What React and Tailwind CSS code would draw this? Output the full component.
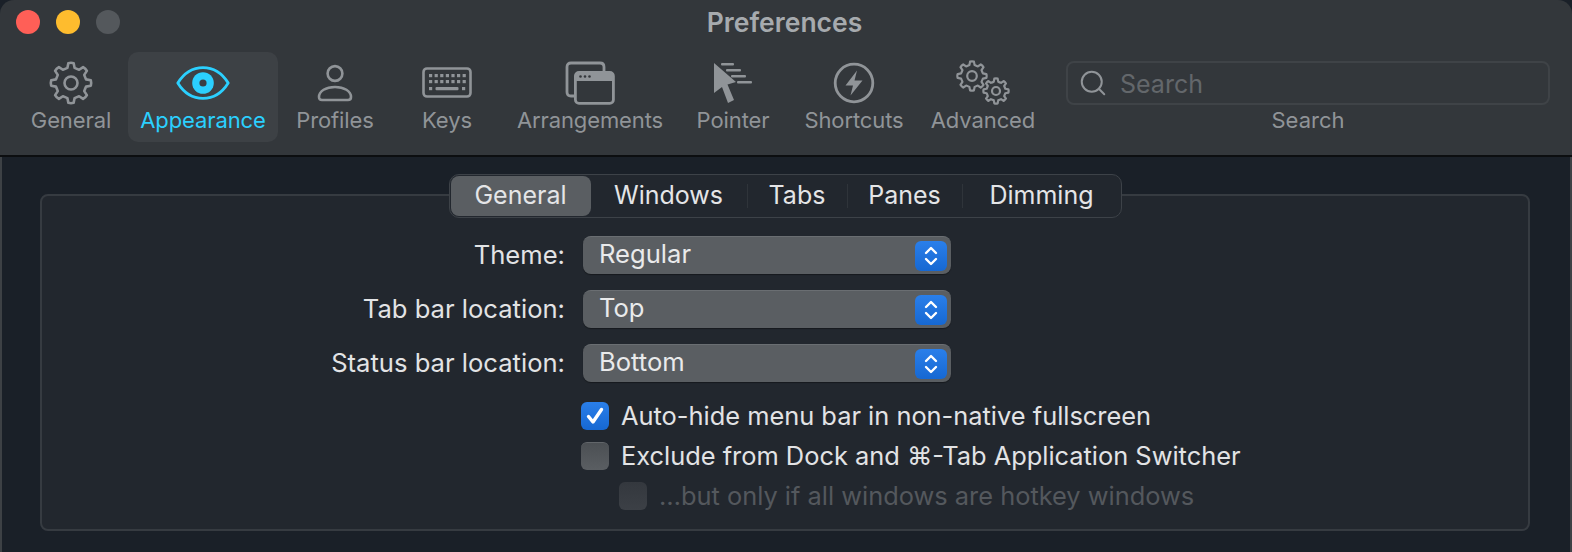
import React from 'react';
import { Search } from 'lucide-react';

// builds a cog outline, the SF "gearshape" look
function gearPath(cx, cy, outer, inner, teeth) {
  const pts = [];
  const step = (Math.PI * 2) / teeth;
  for (let i = 0; i < teeth; i++) {
    const a = i * step - Math.PI / 2;
    const at = (r, d) => `${(cx + r * Math.cos(a + d * step)).toFixed(2)} ${(cy + r * Math.sin(a + d * step)).toFixed(2)}`;
    pts.push(`${i === 0 ? 'M' : 'L'}${at(inner, -0.3)}`);
    pts.push(`L${at(outer, -0.17)}`);
    pts.push(`Q${at(outer * 1.03, 0)} ${at(outer, 0.17)}`);
    pts.push(`L${at(inner, 0.3)}`);
    pts.push(`Q${at(inner * 0.98, 0.5)} ${at(inner, 0.7)}`);
  }
  return pts.join(' ') + 'Z';
}

const GearIcon = () => (
  <svg width="44" height="44" viewBox="0 0 44 44" fill="none" stroke="#909498" strokeWidth="2.6" strokeLinejoin="round">
    <path d={gearPath(22, 22, 20, 15.5, 8)} />
    <circle cx="22" cy="22" r="6.5" />
  </svg>
);

const EyeIcon = () => (
  <svg width="54" height="34" viewBox="0 0 54 34" fill="none">
    <path d="M1.8 17C8 7 17 1.6 27 1.6S46 7 52.2 17C46 27 37 32.4 27 32.4S8 27 1.8 17Z" stroke="#2bd0ff" strokeWidth="2.8" strokeLinejoin="round" />
    <circle cx="27" cy="17" r="10.8" fill="#2bd0ff" />
    <circle cx="27" cy="17" r="3.6" fill="#3b3f43" />
  </svg>
);

const PersonIcon = () => (
  <svg width="36" height="38" viewBox="0 0 36 38" fill="none" stroke="#909498" strokeWidth="2.6">
    <circle cx="18" cy="9.5" r="7.4" />
    <path d="M2 33C2 27 9 23 18 23S34 27 34 33C34 35 33 36 31 36H5C3 36 2 35 2 33Z" strokeLinejoin="round" />
  </svg>
);

const KeyboardIcon = () => {
  const keys = [];
  for (let row = 0; row < 2; row++) {
    for (let i = 0; i < 7; i++) keys.push(<rect key={`${row}-${i}`} x={7 + i * 5.6} y={row === 0 ? 7 : 13} width="3.2" height="3.2" />);
  }
  return (
    <svg width="50" height="32" viewBox="0 0 50 32" fill="#909498">
      <rect x="1.5" y="1.5" width="47" height="28" rx="3.5" fill="none" stroke="#909498" strokeWidth="2.6" />
      {keys}
      <rect x="7" y="20" width="3.2" height="3.2" />
      <rect x="13.5" y="20" width="23" height="3.2" rx="1" />
      <rect x="40" y="20" width="3.2" height="3.2" />
    </svg>
  );
};

const ArrangementsIcon = () => (
  <svg width="52" height="44" viewBox="0 0 52 44" fill="none">
    <path d="M3 31V6C3 3.5 4.5 2 7 2H36C38.5 2 40 3.5 40 6V10" stroke="#909498" strokeWidth="2.8" />
    <path d="M3 31C3 33.5 4.5 35 7 35H11" stroke="#909498" strokeWidth="2.8" />
    <path d="M11 16C11 12.5 12.5 11 15 11H46C48.5 11 50 12.5 50 15V20H11Z" fill="#909498" />
    <rect x="11.4" y="11.4" width="38" height="31" rx="3.6" stroke="#909498" strokeWidth="2.8" />
    <circle cx="16.5" cy="15.5" r="1.3" fill="#33373b" />
    <circle cx="21" cy="15.5" r="1.3" fill="#33373b" />
    <circle cx="25.5" cy="15.5" r="1.3" fill="#33373b" />
  </svg>
);

const PointerIcon = () => (
  <svg width="40" height="42" viewBox="0 0 40 42" fill="#909498">
    <path d="M1 1L23 20L14.5 22.5L21 38L15 41L9 25L1 31Z" />
    <rect x="8" y="1" width="13" height="2.4" rx="1" />
    <rect x="13" y="7" width="15" height="2.4" rx="1" />
    <rect x="18" y="13" width="15" height="2.4" rx="1" />
    <rect x="24" y="19" width="15" height="2.4" rx="1" />
  </svg>
);

const BoltIcon = () => (
  <svg width="42" height="42" viewBox="0 0 42 42" fill="none">
    <circle cx="21" cy="21" r="18.8" stroke="#909498" strokeWidth="2.8" />
    <path d="M24 8.5L12.5 23.5H20L17.5 33.5L29.5 18.5H21.5Z" fill="#909498" />
  </svg>
);

const AdvancedIcon = () => (
  <svg width="54" height="46" viewBox="0 0 54 46" fill="none" stroke="#909498" strokeWidth="2.2" strokeLinejoin="round">
    <path d={gearPath(16, 16, 14.5, 11.2, 8)} />
    <circle cx="16" cy="16" r="4.8" />
    <path d={gearPath(40, 31, 12.5, 9.6, 8)} />
    <circle cx="40" cy="31" r="4" />
  </svg>
);

const toolbarItems = [
  { label: 'General', width: 'w-[114px]', icon: <GearIcon /> },
  { label: 'Appearance', width: 'w-[150px]', icon: <EyeIcon />, active: true },
  { label: 'Profiles', width: 'w-[114px]', icon: <PersonIcon /> },
  { label: 'Keys', width: 'w-[110px]', icon: <KeyboardIcon /> },
  { label: 'Arrangements', width: 'w-[176px]', icon: <ArrangementsIcon /> },
  { label: 'Pointer', width: 'w-[110px]', icon: <PointerIcon /> },
  { label: 'Shortcuts', width: 'w-[132px]', icon: <BoltIcon /> },
  { label: 'Advanced', width: 'w-[126px]', icon: <AdvancedIcon /> },
];

const tabs = ['General', 'Windows', 'Tabs', 'Panes', 'Dimming'];
const tabWidths = ['w-[140px]', 'w-[156px]', 'w-[99px]', 'w-[114px]', 'w-[158px]'];

function ToolbarItem({ label, width, icon, active }) {
  return (
    <div className={`${width} h-[90px] flex flex-col items-center rounded-[10px] ${active ? 'bg-[#3d4145] text-[#2bd0ff]' : 'text-[#909498]'}`}>
      <div className="h-[55px] flex items-center justify-center pt-[7px]">{icon}</div>
      <div className="text-[22px] leading-[26px] tracking-[-0.1px]">{label}</div>
    </div>
  );
}

function PopUp({ label, value }) {
  return (
    <div className="flex items-center h-[38px]">
      <div className="w-[523px] text-right text-[25.6px] text-[#e2e3e5]">{label}</div>
      <div className="ml-[18px] w-[368px] h-[38px] rounded-[8px] bg-[#5a5e62] border-t border-[#6a6e72] shadow-[0_1px_1px_rgba(0,0,0,0.35)] flex items-center justify-between pl-[16px] pr-[4px]">
        <span className="text-[25.6px] leading-[32px] text-[#e9eaeb] -mt-[3px]">{value}</span>
        <div className="w-[32px] h-[30px] rounded-[6px] bg-gradient-to-b from-[#2a7fea] to-[#1668d2] flex items-center justify-center">
          <svg width="16" height="22" viewBox="0 0 16 22" fill="none" stroke="#fff" strokeWidth="2.4" strokeLinecap="round" strokeLinejoin="round">
            <path d="M3 8L8 3L13 8" />
            <path d="M3 14L8 19L13 14" />
          </svg>
        </div>
      </div>
    </div>
  );
}

function CheckRow({ checked, disabled, indent, children }) {
  let box = 'bg-gradient-to-b from-[#4c5054] to-[#5a5e62] border-t border-[#62666a]';
  if (checked) box = 'bg-gradient-to-b from-[#2a7fea] to-[#1668d2]';
  if (disabled) box = 'bg-gradient-to-b from-[#34383e] to-[#3c4046]';
  return (
    <div className={`flex items-center h-[28px] ${indent ? 'ml-[577px]' : 'ml-[539px]'}`}>
      <div className={`w-[28px] h-[28px] rounded-[6px] flex items-center justify-center ${box}`}>
        {checked && (
          <svg width="20" height="20" viewBox="0 0 20 20" fill="none" stroke="#fff" strokeWidth="3.4" strokeLinecap="round" strokeLinejoin="round">
            <path d="M3.5 10.5L8 16L16.5 3.5" />
          </svg>
        )}
      </div>
      <span className={`ml-[12px] text-[25.4px] whitespace-nowrap ${disabled ? 'text-[#54585d]' : 'text-[#e2e3e5]'}`}>{children}</span>
    </div>
  );
}

export default function App() {
  return (
    <div className="w-[1572px] h-[552px] overflow-hidden bg-[#1a2028] flex flex-col font-['Inter','Noto_Sans',sans-serif]">
      <div className="h-[157px] shrink-0 bg-[#33373b] border-b-2 border-[#0c0e10] rounded-t-[14px] flex flex-col">
        <div className="relative h-[52px] flex items-center gap-[16px] pl-[16px] pb-[8px]">
          <div className="w-[24px] h-[24px] rounded-full bg-[#ff5f57]" />
          <div className="w-[24px] h-[24px] rounded-full bg-[#febc2e]" />
          <div className="w-[24px] h-[24px] rounded-full bg-[#54585c]" />
          <div className="absolute inset-x-0 top-[6px] text-center text-[26.5px] leading-[32px] font-semibold text-[#a6aaae] pr-[3px]">Preferences</div>
        </div>
        <div className="flex pl-[14px]">
          {toolbarItems.map(item => <ToolbarItem key={item.label} {...item} />)}
          <div className="ml-[20px] w-[484px] flex flex-col items-center">
            <div className="mt-[9px] w-full h-[44px] rounded-[8px] border-2 border-[#3f4347] flex items-center pl-[10px]">
              <Search size={30} strokeWidth={1.6} className="text-[#909498]" />
              <span className="ml-[12px] text-[25px] leading-[32px] pt-[2px] text-[#63676b]">Search</span>
            </div>
            <div className="mt-[2px] text-[22px] leading-[26px] text-[#909498]">Search</div>
          </div>
        </div>
      </div>

      <div className="flex-1 flex flex-col pl-[38px] pr-[40px] pt-[17px] border-x-2 border-[#3d4145]">
        <div className="relative z-10 self-center h-[44px] rounded-[10px] bg-[#22272e] border border-[#3d4248] flex items-center pl-[1px]">
          {tabs.map((t, i) => (
            <React.Fragment key={t}>
              {i > 1 && <div className="w-px h-[24px] bg-[#2f343a]" />}
              <div className={`${tabWidths[i]} h-[40px] flex items-center justify-center text-[25px] text-[#e4e5e7] ${i === 0 ? 'bg-[#5a5e62] rounded-[8px]' : ''}`}>{t}</div>
            </React.Fragment>
          ))}
        </div>
        <div className="-mt-[24px] h-[337px] rounded-[8px] bg-[#22272e] border-2 border-[#363b41] pt-[40px] flex flex-col">
          <div className="flex flex-col gap-[16px]">
            <PopUp label="Theme:" value="Regular" />
            <PopUp label="Tab bar location:" value="Top" />
            <PopUp label="Status bar location:" value="Bottom" />
          </div>
          <div className="mt-[20px] flex flex-col gap-[12px]">
            <CheckRow checked>Auto-hide menu bar in non-native fullscreen</CheckRow>
            <CheckRow>Exclude from Dock and ⌘-Tab Application Switcher</CheckRow>
            <CheckRow disabled indent>…but only if all windows are hotkey windows</CheckRow>
          </div>
        </div>
      </div>
    </div>
  );
}
